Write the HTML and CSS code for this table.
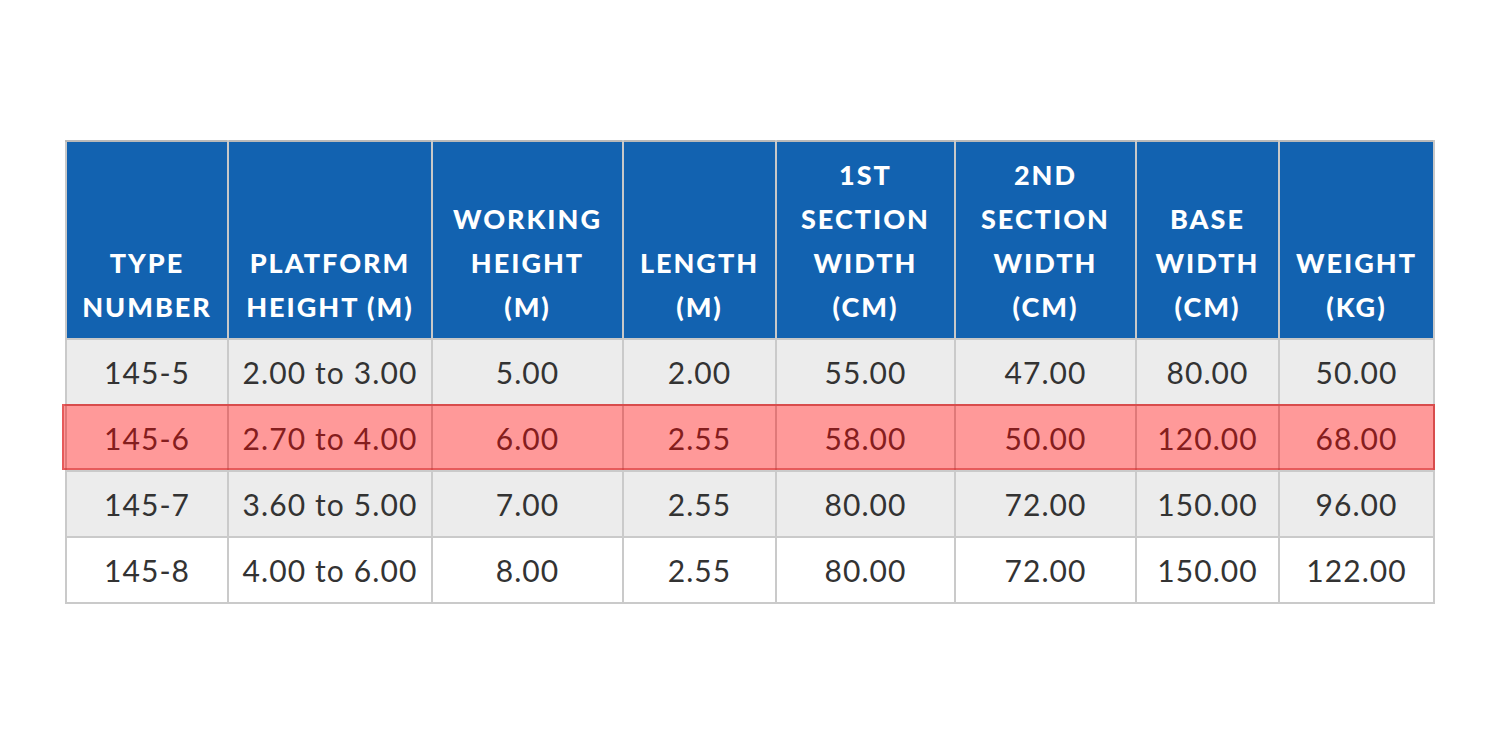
FILE: index.html
```html
<!DOCTYPE html>
<html>
<head>
<meta charset="utf-8">
<link rel="stylesheet" href="styles.css">
</head>
<body>
<div class="page">
  <div class="table-wrap">
    <table class="spec">
      <colgroup>
        <col class="c1"><col class="c2"><col class="c3"><col class="c4"><col class="c5"><col class="c6"><col class="c7"><col class="c8">
      </colgroup>
      <thead>
        <tr>
          <th>TYPE<br>NUMBER</th>
          <th>PLATFORM<br>HEIGHT (M)</th>
          <th>WORKING<br>HEIGHT<br>(M)</th>
          <th>LENGTH<br>(M)</th>
          <th>1ST<br>SECTION<br>WIDTH<br>(CM)</th>
          <th>2ND<br>SECTION<br>WIDTH<br>(CM)</th>
          <th>BASE<br>WIDTH<br>(CM)</th>
          <th>WEIGHT<br>(KG)</th>
        </tr>
      </thead>
      <tbody>
        <tr class="alt">
          <td>145-5</td><td>2.00 to 3.00</td><td>5.00</td><td>2.00</td><td>55.00</td><td>47.00</td><td>80.00</td><td>50.00</td>
        </tr>
        <tr>
          <td>145-6</td><td>2.70 to 4.00</td><td>6.00</td><td>2.55</td><td>58.00</td><td>50.00</td><td>120.00</td><td>68.00</td>
        </tr>
        <tr class="alt">
          <td>145-7</td><td>3.60 to 5.00</td><td>7.00</td><td>2.55</td><td>80.00</td><td>72.00</td><td>150.00</td><td>96.00</td>
        </tr>
        <tr>
          <td>145-8</td><td>4.00 to 6.00</td><td>8.00</td><td>2.55</td><td>80.00</td><td>72.00</td><td>150.00</td><td>122.00</td>
        </tr>
      </tbody>
    </table>
    <div class="highlight"></div>
  </div>
</div>
</body>
</html>
```
FILE: styles.css
```css
html, body {
  margin: 0;
  padding: 0;
  background: #ffffff;
}
.page {
  padding: 140px 65px 0 65px;
  font-family: "Lato", "Open Sans", sans-serif;
}
.table-wrap {
  position: relative;
  width: 1368px;
}
.spec {
  width: 1368px;
  table-layout: fixed;
  border-collapse: collapse;
  border: 2px solid #b9b9b9;
}
.c1 { width: 162px; }
.c2 { width: 204px; }
.c3 { width: 191px; }
.c4 { width: 153px; }
.c5 { width: 179px; }
.c6 { width: 181px; }
.c7 { width: 143px; }
.c8 { width: 155px; }
.spec th {
  background: #1262b0;
  color: #ffffff;
  font-weight: 900;
  font-size: 27px;
  line-height: 44px;
  letter-spacing: 2px;
  vertical-align: bottom;
  text-align: center;
  padding: 11px 0 9px;
  border: 2px solid #c8c8c8;
  border-top-color: #b9b9b9;
  height: 176px;
  white-space: nowrap;
}
.spec td {
  height: 64px;
  padding: 0 2px;
  text-align: center;
  vertical-align: middle;
  font-size: 30px;
  color: #333333;
  border: 2px solid #cacaca;
  background: #ffffff;
  letter-spacing: 1.1px;
}
.spec tr.alt td {
  background: #ececec;
}
.highlight {
  position: absolute;
  left: -3px;
  right: -2px;
  top: 264px;
  height: 62px;
  background: rgba(255, 0, 0, 0.4);
  border: 2px solid rgba(210, 40, 40, 0.55);
  pointer-events: none;
}
```
